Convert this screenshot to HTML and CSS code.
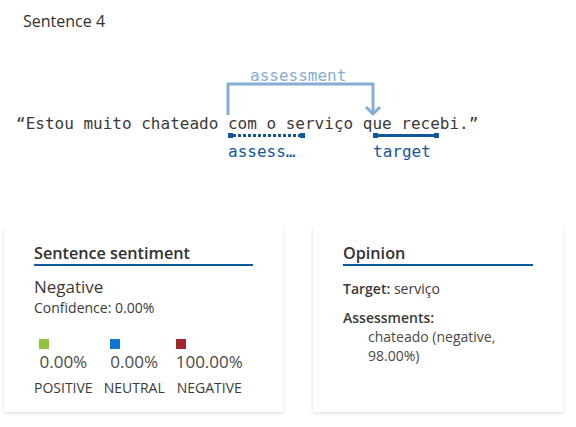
FILE: index.html
```html
<!DOCTYPE html>
<html lang="pt">
<head>
<meta charset="utf-8">
<title>Sentence 4</title>
<link rel="stylesheet" href="styles.css">
</head>
<body>
<div class="page">
  <div class="title">Sentence 4</div>

  <div class="sentence-area">
    <svg class="bracket" width="576" height="110" viewBox="0 0 576 110">
      <path d="M228 55 V24 H373 V54" fill="none" stroke="#86aed3" stroke-width="3"/>
      <path d="M366 47 L373 54 L380 47" fill="none" stroke="#86aed3" stroke-width="3"/>
    </svg>
    <span class="rel-label">assessment</span>
    <p class="sentence">“Estou muito chateado com o serviço que recebi.”</p>
    <span class="span-line dotted"><i class="cap left"></i><i class="cap right"></i></span>
    <span class="span-line solid"><i class="cap left"></i><i class="cap right"></i></span>
    <span class="span-label assess">assess…</span>
    <span class="span-label target">target</span>
  </div>

  <div class="cards">
    <section class="card card-sentiment">
      <h2 class="card-title">Sentence sentiment</h2>
      <div class="overall">Negative</div>
      <div class="confidence">Confidence: 0.00%</div>
      <div class="scores">
        <div class="score">
          <div class="score-inner">
            <span class="swatch pos"></span>
            <span class="value">0.00%</span>
          </div>
          <span class="score-label">POSITIVE</span>
        </div>
        <div class="score">
          <div class="score-inner">
            <span class="swatch neu"></span>
            <span class="value">0.00%</span>
          </div>
          <span class="score-label">NEUTRAL</span>
        </div>
        <div class="score">
          <div class="score-inner">
            <span class="swatch neg"></span>
            <span class="value">100.00%</span>
          </div>
          <span class="score-label">NEGATIVE</span>
        </div>
      </div>
    </section>

    <section class="card card-opinion">
      <h2 class="card-title">Opinion</h2>
      <div class="field"><b>Target:</b> serviço</div>
      <div class="field field-assess"><b>Assessments:</b></div>
      <div class="assess-item">chateado (negative,<br>98.00%)</div>
    </section>
  </div>
</div>
</body>
</html>
```

FILE: styles.css
```css
html, body {
  margin: 0;
  padding: 0;
  background: #ffffff;
}

body {
  font-family: "Open Sans", "Noto Sans", Arial, sans-serif;
  color: #323130;
}

.page {
  width: 576px;
  height: 427px;
}

.title {
  padding: 10px 0 0 23px;
  font-size: 16px;
  line-height: 22px;
  color: #323130;
}

.sentence-area {
  position: relative;
  margin-top: 28px;
  height: 110px;
  font-family: "DejaVu Sans Mono", "Liberation Mono", monospace;
  font-size: 16px;
}

.bracket {
  position: absolute;
  left: 0;
  top: 0;
}

.rel-label {
  position: absolute;
  left: 250px;
  top: 6px;
  line-height: 20px;
  color: #86aed3;
}

.sentence {
  margin: 0;
  padding: 54px 0 0 16px;
  line-height: 20px;
  color: #3a3a3a;
  white-space: pre;
}

.span-line {
  position: absolute;
  top: 74px;
  height: 3px;
}

.span-line.dotted {
  left: 228px;
  width: 77px;
  background: repeating-linear-gradient(to right, #13579b 0 3px, transparent 3px 5px);
}

.span-line.solid {
  left: 373px;
  width: 66px;
  background: #13579b;
}

.cap {
  position: absolute;
  top: -1px;
  width: 5px;
  height: 5px;
  background: #13579b;
}

.cap.left { left: 0; }
.cap.right { right: 0; }

.span-label {
  position: absolute;
  top: 82px;
  line-height: 20px;
  color: #13579b;
}

.span-label.assess { left: 228px; }
.span-label.target { left: 373px; }

.cards {
  display: flex;
  gap: 30px;
  margin: 56px 0 0 4px;
}

.card {
  box-sizing: border-box;
  height: 186px;
  padding: 17px 30px 0;
  background: #ffffff;
  box-shadow: 0 1.6px 3.6px rgba(0, 0, 0, 0.13), 0 0.3px 0.9px rgba(0, 0, 0, 0.11);
}

.card-sentiment { width: 279px; }
.card-opinion { width: 250px; }

.card-title {
  margin: 0;
  font-size: 16.2px;
  font-weight: 600;
  line-height: 21px;
  border-bottom: 2px solid #0f5a9c;
  color: #323130;
}

.overall {
  margin-top: 10px;
  font-size: 17px;
  line-height: 21px;
  color: #3b3a39;
}

.confidence {
  margin-top: 2px;
  font-size: 14px;
  line-height: 18px;
  color: #3b3a39;
}

.scores {
  display: flex;
  gap: 11px;
  margin-top: 22px;
}

.score {
  display: flex;
  flex-direction: column;
  align-items: center;
}

.score-inner {
  display: flex;
  flex-direction: column;
  align-items: flex-start;
}

.swatch {
  width: 10px;
  height: 10px;
}

.swatch.pos { background: #92c13c; }
.swatch.neu { background: #0d78d4; }
.swatch.neg { background: #a4262c; }

.value {
  margin-top: 2px;
  font-size: 17px;
  line-height: 22px;
  color: #4a4948;
}

.score-label {
  margin-top: 6px;
  font-size: 14px;
  line-height: 18px;
  color: #3b3a39;
}

.field {
  margin-top: 13px;
  font-size: 14px;
  line-height: 19px;
  color: #3b3a39;
}

.field b { font-weight: 600; }

.field-assess { margin-top: 10px; }

.assess-item {
  padding-left: 25px;
  font-size: 14px;
  line-height: 19px;
  color: #4a4948;
}
```
